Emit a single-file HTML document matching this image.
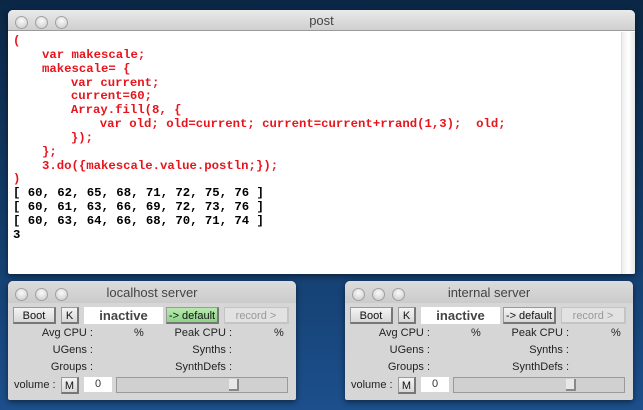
<!DOCTYPE html>
<html><head><meta charset="utf-8"><style>
*{margin:0;padding:0;box-sizing:border-box}
body{width:643px;height:410px;overflow:hidden;position:relative;background:linear-gradient(180deg,#0b2745 0%,#123a66 50%,#1c4f8c 100%);font-family:"Liberation Sans",sans-serif}
.win{position:absolute;border-radius:5px 5px 2px 2px;overflow:hidden;box-shadow:0 2px 6px rgba(0,0,0,.5)}
.tb{height:21px;background:linear-gradient(#eaeaea,#cfcfcf);border-bottom:1px solid #9a9a9a;position:relative;text-align:center;font-size:13px;color:#444;line-height:21px}
.dots{position:absolute;left:7px;top:4px}
.dots i{display:inline-block;width:13px;height:13px;border-radius:50%;margin-right:7px;background:radial-gradient(circle at 50% 35%,#fafafa,#c8c8c8);border:1px solid #a0a0a0}
#post{left:8px;top:10px;width:627px;height:264px;background:#fff}
pre{position:absolute;left:5px;top:25px;font:bold 12.3px/13.85px "Liberation Mono",monospace;color:#e8141c;tab-size:3.92;-moz-tab-size:3.92}
pre b{color:#000}
.sb{position:absolute;right:0;top:22px;width:14px;bottom:0;background:linear-gradient(90deg,#eee,#fff,#e6e6e6);border-left:1px solid #ddd}
.srv{top:281px;width:288px;height:119px;background:#d6d6d6}
.srv .tb{background:linear-gradient(#dcdcdc,#cbcbcb);border:none;height:22px;line-height:23px}
.b{position:absolute;height:17px;font-size:11px;line-height:16px;text-align:center;background:linear-gradient(#f4f4f4,#d8d8d8);border:1px solid #9a9a9a;border-right:2px solid #777;border-bottom:2px solid #777;color:#111}
.f{position:absolute;background:#fff;text-align:center;color:#333}
.l{position:absolute;font-size:11px;color:#222;text-align:right}
</style></head><body>
<div class="win" id="post"><div class="tb"><span class="dots"><i></i><i></i><i></i></span>post</div>
<pre>(
	var makescale;
	makescale= {
		var current;
		current=60;
		Array.fill(8, {
			var old; old=current; current=current+rrand(1,3);  old;
		});
	};
	3.do({makescale.value.postln;});
)
<b>[ 60, 62, 65, 68, 71, 72, 75, 76 ]
[ 60, 61, 63, 66, 69, 72, 73, 76 ]
[ 60, 63, 64, 66, 68, 70, 71, 74 ]
3</b></pre>
<div class="sb"></div></div>

<div class="win srv" style="left:8px"><div class="tb"><span class="dots"><i></i><i></i><i></i></span>localhost server</div>
<div class="b" style="left:5px;top:26px;width:43px">Boot</div>
<div class="b" style="left:53px;top:26px;width:18px">K</div>
<div class="f" style="left:76px;top:26px;width:79px;height:17px;font:bold 13px/17px 'Liberation Sans';color:#444">inactive</div>
<div class="b" style="left:158px;top:26px;width:53px;background:linear-gradient(#b8e8b0,#8cd486)">-&gt; default</div>
<div class="b" style="left:216px;top:26px;width:65px;color:#999;background:#e2e2e2;border-color:#c4c4c4">record &gt;</div>
<div class="l" style="left:0;width:85px;top:46px">Avg CPU :</div><div class="l" style="left:126px;top:46px">%</div>
<div class="l" style="left:130px;width:94px;top:46px">Peak CPU :</div><div class="l" style="left:266px;top:46px">%</div>
<div class="l" style="left:0;width:85px;top:63px">UGens :</div><div class="l" style="left:130px;width:94px;top:63px">Synths :</div>
<div class="l" style="left:0;width:85px;top:80px">Groups :</div><div class="l" style="left:130px;width:94px;top:80px">SynthDefs :</div>
<div class="l" style="left:6px;top:98px">volume :</div>
<div class="b" style="left:53px;top:96px;width:18px">M</div>
<div class="f" style="left:76px;top:96px;width:28px;height:15px;font-size:11px;line-height:14px">0</div>
<div style="position:absolute;left:108px;top:96px;width:172px;height:16px;border:1px solid #999;background:#d0d0d0"><div style="position:absolute;left:112px;top:1px;width:10px;height:12px;background:#e8e8e8;border:1px solid #888;border-width:0 2px 2px 0"></div></div>
</div>

<div class="win srv" style="left:345px"><div class="tb"><span class="dots"><i></i><i></i><i></i></span>internal server</div>
<div class="b" style="left:5px;top:26px;width:43px">Boot</div>
<div class="b" style="left:53px;top:26px;width:18px">K</div>
<div class="f" style="left:76px;top:26px;width:79px;height:17px;font:bold 13px/17px 'Liberation Sans';color:#444">inactive</div>
<div class="b" style="left:158px;top:26px;width:53px">-&gt; default</div>
<div class="b" style="left:216px;top:26px;width:65px;color:#999;background:#e2e2e2;border-color:#c4c4c4">record &gt;</div>
<div class="l" style="left:0;width:85px;top:46px">Avg CPU :</div><div class="l" style="left:126px;top:46px">%</div>
<div class="l" style="left:130px;width:94px;top:46px">Peak CPU :</div><div class="l" style="left:266px;top:46px">%</div>
<div class="l" style="left:0;width:85px;top:63px">UGens :</div><div class="l" style="left:130px;width:94px;top:63px">Synths :</div>
<div class="l" style="left:0;width:85px;top:80px">Groups :</div><div class="l" style="left:130px;width:94px;top:80px">SynthDefs :</div>
<div class="l" style="left:6px;top:98px">volume :</div>
<div class="b" style="left:53px;top:96px;width:18px">M</div>
<div class="f" style="left:76px;top:96px;width:28px;height:15px;font-size:11px;line-height:14px">0</div>
<div style="position:absolute;left:108px;top:96px;width:172px;height:16px;border:1px solid #999;background:#d0d0d0"><div style="position:absolute;left:112px;top:1px;width:10px;height:12px;background:#e8e8e8;border:1px solid #888;border-width:0 2px 2px 0"></div></div>
</div>
</body></html>
